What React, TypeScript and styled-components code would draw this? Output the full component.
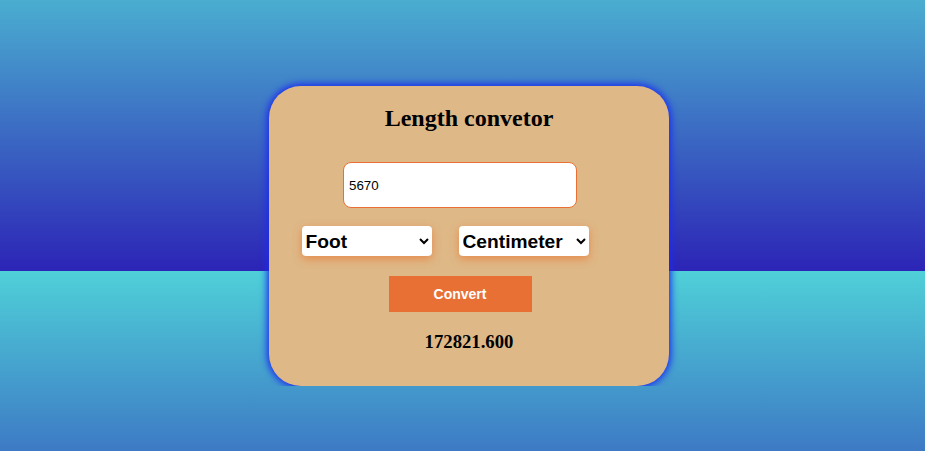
import React, { useState } from "react";
import styled, { createGlobalStyle } from "styled-components";

const Global = createGlobalStyle`
  html {
    height: 100%;
    background:
      linear-gradient(to bottom, #4aaed0, #2c24b6) 0 0 / 100% 271px no-repeat,
      linear-gradient(to bottom, #4fd0d8, #3d7ac5) 0 271px / 100% 180px no-repeat;
    background-color: #3d7ac5;
  }
  body {
    margin: 0;
    font-family: "Liberation Serif", "Times New Roman", serif;
  }
`;

const Page = styled.div`
  display: flex;
  justify-content: center;
  padding: 86px 0 0 13px;
`;

const Card = styled.div`
  box-sizing: border-box;
  width: 400px;
  height: 300px;
  background: #deb887;
  border-radius: 32px;
  box-shadow: 0 0 7px 2px #1b2cf0;
  display: flex;
  flex-direction: column;
  align-items: center;
  padding-top: 19px;
`;

const Title = styled.h2`
  margin: 0;
  font-family: "Liberation Serif", "Times New Roman", serif;
  font-weight: bold;
  font-size: 24px;
  line-height: 27px;
  color: #000;
`;

const ValueInput = styled.input`
  box-sizing: border-box;
  width: 234px;
  height: 46px;
  margin: 30px 18px 0 0;
  padding: 1px 5px;
  border: 1px solid #e97034;
  border-radius: 8px;
  background: #fff;
  font-family: "Liberation Sans", Arial, sans-serif;
  font-size: 13.33px;
  color: #000;
  outline: none;
`;

const SelectRow = styled.div`
  display: flex;
  gap: 27px;
  margin: 18px 48px 0 0;
`;

const UnitSelect = styled.select`
  box-sizing: border-box;
  width: 130px;
  height: 30px;
  border: none;
  border-radius: 4px;
  background-color: #fff;
  font-family: "Liberation Sans", Arial, sans-serif;
  font-weight: bold;
  font-size: 19.2px;
  color: #000;
  box-shadow: 0 3px 8px rgba(233, 120, 50, 0.7);
  outline: none;
`;

const ConvertButton = styled.button`
  width: 143px;
  height: 36px;
  margin: 20px 18px 0 0;
  border: none;
  border-radius: 0;
  background: #e97034;
  color: #fff;
  font-family: "Liberation Sans", Arial, sans-serif;
  font-weight: bold;
  font-size: 14px;
  cursor: pointer;
`;

const Result = styled.h3`
  margin: 19px 0 0 0;
  font-family: "Liberation Serif", "Times New Roman", serif;
  font-weight: bold;
  font-size: 18.72px;
  line-height: 22px;
  color: #000;
`;

const units = ["Meter", "Kilometer", "Centimeter", "Millimeter", "Inch", "Foot", "Yard", "Mile"];

export default function App() {
  const [value, setValue] = useState("5670");
  const [from, setFrom] = useState("Foot");
  const [to, setTo] = useState("Centimeter");
  return (
    <>
      <Global />
      <Page>
        <Card>
          <Title>Length convetor</Title>
          <ValueInput value={value} onChange={(e) => setValue(e.target.value)} />
          <SelectRow>
            <UnitSelect value={from} onChange={(e) => setFrom(e.target.value)}>
              {units.map((u) => (
                <option key={u}>{u}</option>
              ))}
            </UnitSelect>
            <UnitSelect value={to} onChange={(e) => setTo(e.target.value)}>
              {units.map((u) => (
                <option key={u}>{u}</option>
              ))}
            </UnitSelect>
          </SelectRow>
          <ConvertButton>Convert</ConvertButton>
          <Result>172821.600</Result>
        </Card>
      </Page>
    </>
  );
}
